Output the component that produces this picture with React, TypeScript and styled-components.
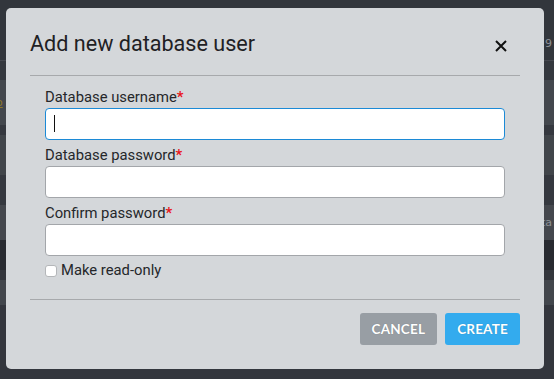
import React from "react";
import styled, { createGlobalStyle } from "styled-components";

const Global = createGlobalStyle`
  html, body { margin: 0; padding: 0; }
  body {
    width: 554px; height: 379px; overflow: hidden;
    background: #42464e;
    font-family: Lato, "Open Sans", sans-serif;
  }
`;

const Page = styled.div`
  position: relative;
  width: 554px;
  height: 379px;
  display: flex;
  flex-direction: column;
  background: #42464e;
`;

const Band = styled.div<{ $h: number; $bg: string }>`
  height: ${(p) => p.$h}px;
  background: ${(p) => p.$bg};
  display: flex;
  align-items: center;
  justify-content: space-between;
  padding: 0 2px;
  font-family: "DejaVu Sans", sans-serif;
  font-size: 11px;
  color: #c9ccd0;
  box-sizing: border-box;
  flex-shrink: 0;
`;

const Gold = styled.span`
  color: #c9a227;
  text-decoration: underline;
  margin-left: -6px;
`;

const Overlay = styled.div`
  position: absolute;
  inset: 0;
  background: rgba(30, 32, 36, 0.35);
`;

const Modal = styled.div`
  position: absolute;
  left: 6px;
  top: 8px;
  width: 538px;
  height: 361px;
  box-sizing: border-box;
  background: #d4d7da;
  border-radius: 5px;
  padding: 0 24px 0 24px;
  display: flex;
  flex-direction: column;
`;

const Header = styled.div`
  display: flex;
  align-items: center;
  justify-content: space-between;
  height: 67px;
  border-bottom: 1px solid #a7a9ac;
`;

const Title = styled.h2`
  margin: 0;
  font-family: Roboto, sans-serif;
  font-weight: 400;
  font-size: 21.6px;
  color: #1f2124;
  padding-top: 3px;
`;

const Close = styled.button`
  width: 20px;
  height: 20px;
  border: none;
  background: transparent;
  padding: 0;
  margin-right: 9px;
  margin-top: 9px;
  display: flex;
  align-items: center;
  justify-content: center;
  cursor: pointer;
`;

const Body = styled.div`
  padding: 11px 15px 0 15px;
  display: flex;
  flex-direction: column;
  height: 224px;
  border-bottom: 1px solid #a7a9ac;
  box-sizing: border-box;
`;

const Label = styled.label`
  display: block;
  font-family: Roboto, sans-serif;
  font-size: 14.8px;
  color: #25272a;
  line-height: 20px;
  margin-bottom: 1px;
`;

const Req = styled.span`
  color: #e8161c;
  font-weight: 700;
`;

const Input = styled.input<{ $focus?: boolean }>`
  box-sizing: border-box;
  width: 460px;
  height: 32px;
  border-radius: 4px;
  border: 1px solid ${(p) => (p.$focus ? "#1c8ad6" : "#a3a6aa")};
  background: #fff;
  outline: none;
  margin: 0 0 5px 0;
  padding: 0 8px;
  font-size: 14px;
`;

const Caret = styled.div`
  position: relative;
`;

const CaretLine = styled.span`
  position: absolute;
  left: 9px;
  top: 7px;
  width: 1px;
  height: 17px;
  background: #111;
`;

const CheckRow = styled.label`
  display: flex;
  align-items: center;
  gap: 4px;
  font-family: Roboto, sans-serif;
  font-size: 14.8px;
  color: #25272a;
  margin-top: 0px;
`;

const Box = styled.span`
  width: 10px;
  height: 10px;
  border: 1px solid #b4b6b9;
  border-radius: 3px;
  background: #fff;
  margin-top: 1px;
`;

const Footer = styled.div`
  display: flex;
  justify-content: flex-end;
  gap: 8px;
  padding-top: 13px;
`;

const Btn = styled.button<{ $primary?: boolean }>`
  height: 32px;
  padding: 0 12px;
  border: none;
  border-radius: 3px;
  background: ${(p) => (p.$primary ? "#33abee" : "#989ea4")};
  color: #fff;
  font-family: Lato, sans-serif;
  font-weight: 700;
  font-size: 13.5px;
  letter-spacing: 0.2px;
  text-shadow: 0 0 1px rgba(0, 0, 0, 0.25);
  cursor: pointer;
`;

export default function App() {
  return (
    <>
      <Global />
      <Page>
        <Band $h={60} $bg="#3e4249">
          <span />
          <span style={{ paddingTop: 26 }}>9</span>
        </Band>
        <Band $h={1} $bg="#5b5f66" />
        <Band $h={19} $bg="#41454c" />
        <Band $h={45} $bg="#585c63">
          <Gold>o</Gold>
          <span />
        </Band>
        <Band $h={10} $bg="#42464d" />
        <Band $h={40} $bg="#55595f" />
        <Band $h={30} $bg="#42464d" />
        <Band $h={35} $bg="#595d63">
          <span />
          <span>ata</span>
        </Band>
        <Band $h={30} $bg="#2f3136" />
        <Band $h={10} $bg="#3f4349" />
        <Band $h={25} $bg="#575b61" />
        <Band $h={74} $bg="#3f434a" />
        <Overlay />
        <Modal>
          <Header>
            <Title>Add new database user</Title>
            <Close aria-label="close">
              <svg width="12" height="12" viewBox="0 0 12 12">
                <path d="M1 1 L11 11 M11 1 L1 11" stroke="#111" strokeWidth="2" />
              </svg>
            </Close>
          </Header>
          <Body>
            <Label>
              Database username<Req>*</Req>
            </Label>
            <Caret>
              <Input $focus />
              <CaretLine />
            </Caret>
            <Label>
              Database password<Req>*</Req>
            </Label>
            <Input type="password" />
            <Label>
              Confirm password<Req>*</Req>
            </Label>
            <Input type="password" />
            <CheckRow>
              <Box />
              Make read-only
            </CheckRow>
          </Body>
          <Footer>
            <Btn>CANCEL</Btn>
            <Btn $primary>CREATE</Btn>
          </Footer>
        </Modal>
      </Page>
    </>
  );
}
